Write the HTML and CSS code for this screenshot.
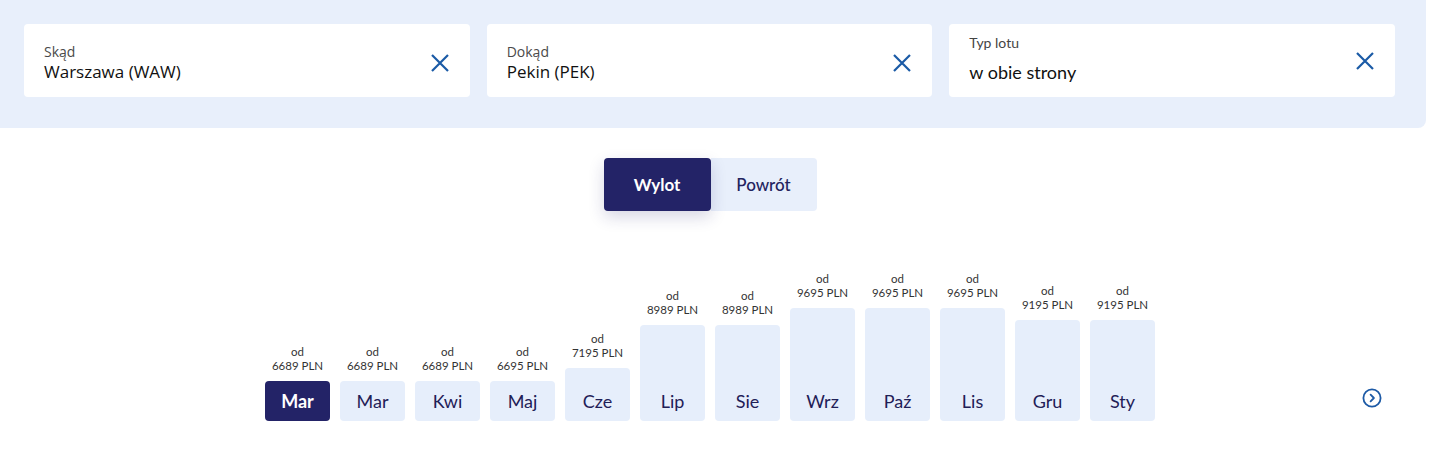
FILE: index.html
```html
<!DOCTYPE html>
<html lang="pl">
<head>
<meta charset="utf-8">
<title>Kalendarz cen</title>
<link rel="stylesheet" href="styles.css">
</head>
<body>
  <section class="search">
    <div class="field">
      <div class="field-text">
        <span class="field-label">Skąd</span>
        <span class="field-value">Warszawa (WAW)</span>
      </div>
      <button class="clear" aria-label="Wyczyść">
        <svg viewBox="0 0 18 18" width="18" height="18"><path d="M1 1L17 17M17 1L1 17"/></svg>
      </button>
    </div>
    <div class="field">
      <div class="field-text">
        <span class="field-label">Dokąd</span>
        <span class="field-value">Pekin (PEK)</span>
      </div>
      <button class="clear" aria-label="Wyczyść">
        <svg viewBox="0 0 18 18" width="18" height="18"><path d="M1 1L17 17M17 1L1 17"/></svg>
      </button>
    </div>
    <div class="field field--select">
      <div class="field-text">
        <span class="field-label">Typ lotu</span>
        <span class="field-value">w obie strony</span>
      </div>
      <button class="clear" aria-label="Wyczyść">
        <svg viewBox="0 0 18 18" width="18" height="18"><path d="M1 1L17 17M17 1L1 17"/></svg>
      </button>
    </div>
  </section>

  <main class="content">
    <div class="toggle">
      <button class="toggle-btn is-active">Wylot</button>
      <button class="toggle-btn">Powrót</button>
    </div>

    <div class="chart">
      <div class="months">
        <div class="month"><div class="price"><span>od</span><span>6689 PLN</span></div><div class="bar is-selected" style="height:40px">Mar</div></div>
        <div class="month"><div class="price"><span>od</span><span>6689 PLN</span></div><div class="bar" style="height:40px">Mar</div></div>
        <div class="month"><div class="price"><span>od</span><span>6689 PLN</span></div><div class="bar" style="height:40px">Kwi</div></div>
        <div class="month"><div class="price"><span>od</span><span>6695 PLN</span></div><div class="bar" style="height:40px">Maj</div></div>
        <div class="month"><div class="price"><span>od</span><span>7195 PLN</span></div><div class="bar" style="height:53px">Cze</div></div>
        <div class="month"><div class="price"><span>od</span><span>8989 PLN</span></div><div class="bar" style="height:96px">Lip</div></div>
        <div class="month"><div class="price"><span>od</span><span>8989 PLN</span></div><div class="bar" style="height:96px">Sie</div></div>
        <div class="month"><div class="price"><span>od</span><span>9695 PLN</span></div><div class="bar" style="height:113px">Wrz</div></div>
        <div class="month"><div class="price"><span>od</span><span>9695 PLN</span></div><div class="bar" style="height:113px">Paź</div></div>
        <div class="month"><div class="price"><span>od</span><span>9695 PLN</span></div><div class="bar" style="height:113px">Lis</div></div>
        <div class="month"><div class="price"><span>od</span><span>9195 PLN</span></div><div class="bar" style="height:101px">Gru</div></div>
        <div class="month"><div class="price"><span>od</span><span>9195 PLN</span></div><div class="bar" style="height:101px">Sty</div></div>
      </div>
      <button class="next" aria-label="Następne miesiące">
        <svg viewBox="0 0 20 20" width="20" height="20"><circle cx="10" cy="10" r="8.6"/><path d="M8.6 6.6L11.9 10L8.6 13.4"/></svg>
      </button>
    </div>
  </main>
</body>
</html>
```

FILE: styles.css
```css
* { box-sizing: border-box; }

body {
  margin: 0;
  background: #ffffff;
  font-family: "Open Sans", "Liberation Sans", sans-serif;
  color: #1b1b1b;
}

button {
  font: inherit;
  border: 0;
  background: none;
  padding: 0;
  cursor: pointer;
}

/* search panel */
.search {
  width: 1426px;
  display: flex;
  gap: 17px;
  padding: 24px 31px 31px 24px;
  background: #e8effb;
  border-bottom-right-radius: 8px;
}

.field {
  flex: 1;
  height: 73px;
  display: flex;
  align-items: center;
  justify-content: space-between;
  padding: 4px 21px 0 20px;
  background: #ffffff;
  border-radius: 4px;
}

.field-text {
  display: flex;
  flex-direction: column;
}

.field-label {
  font-size: 14px;
  line-height: 18px;
  color: #4a4a4a;
}

.field-value {
  font-size: 17px;
  line-height: 22px;
  color: #111111;
}

.field--select {
  padding-top: 0;
}

.field--select .field-text {
  margin-top: -4px;
}

.field--select .field-label {
  font-family: "Lato", "Open Sans", sans-serif;
  font-size: 14px;
  color: #444444;
  line-height: 18px;
  margin-bottom: 9px;
}

.field--select .field-value {
  font-family: "Lato", "Open Sans", sans-serif;
  font-size: 18px;
}

.clear {
  width: 18px;
  height: 18px;
  display: flex;
}

.clear svg {
  fill: none;
  stroke: #1a5aa6;
  stroke-width: 2.2;
}

/* departure / return toggle and month chart */
.content {
  width: 1420px;
  font-family: "Lato", "Open Sans", sans-serif;
}

.toggle {
  display: flex;
  justify-content: center;
  margin-top: 30px;
}

.toggle-btn {
  height: 53px;
  width: 106px;
  font-size: 17px;
  font-weight: 500;
  color: #23235f;
  background: #e8effb;
  border-radius: 0 4px 4px 0;
}

.toggle-btn.is-active {
  width: 107px;
  color: #ffffff;
  font-weight: 700;
  background: #232367;
  border-radius: 4px;
  box-shadow: 0 6px 16px rgba(35, 35, 103, 0.18);
  position: relative;
}

.chart {
  display: grid;
  grid-template-columns: 1fr auto 1fr;
  align-items: end;
  margin-top: 61px;
}

.months {
  grid-column: 2;
  display: flex;
  align-items: flex-end;
  gap: 10px;
}

.month {
  width: 65px;
  display: flex;
  flex-direction: column;
  align-items: center;
}

.price {
  display: flex;
  flex-direction: column;
  align-items: center;
  font-size: 11.5px;
  line-height: 14px;
  color: #333333;
  text-align: center;
  margin-bottom: 8px;
}

.bar {
  width: 100%;
  display: flex;
  align-items: flex-end;
  justify-content: center;
  padding-bottom: 9px;
  font-size: 18px;
  line-height: 22px;
  color: #1f2057;
  background: #e6eefb;
  border-radius: 4px;
}

.bar.is-selected {
  background: #232367;
  color: #ffffff;
  font-weight: 700;
}

.next {
  grid-column: 3;
  justify-self: end;
  margin: 0 38px 13px 0;
  width: 20px;
  height: 20px;
  display: flex;
}

.next svg {
  fill: none;
  stroke: #1d5aa6;
  stroke-width: 1.8;
  stroke-linecap: round;
  stroke-linejoin: round;
}
```
